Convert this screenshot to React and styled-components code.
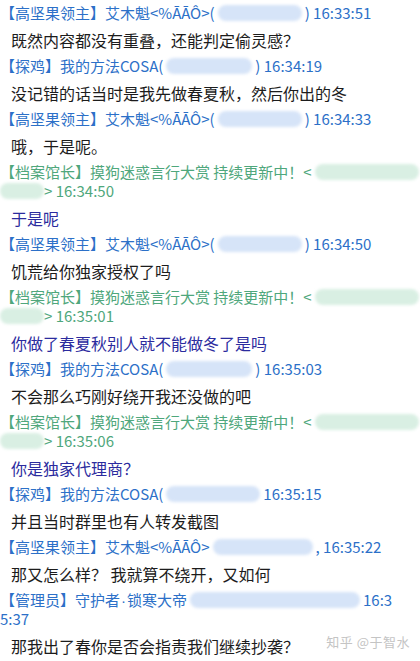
import React from "react";
import styled, { createGlobalStyle } from "styled-components";

const GlobalStyle = createGlobalStyle`
  html, body {
    margin: 0;
    padding: 0;
    background: #ffffff;
  }
  body {
    font-family: "Noto Sans CJK SC", "Noto Sans", sans-serif;
  }
`;

const Chat = styled.div`
  position: relative;
  width: 420px;
  height: 661px;
  overflow: hidden;
  padding-top: 3px;
  box-sizing: border-box;
  background: #ffffff;
`;

const Header = styled.div`
  font-size: 15px;
  line-height: 19px;
  white-space: nowrap;
  color: ${(p) => (p.$tone === "green" ? "#4fa77c" : "#2c70c8")};
`;

const Line = styled.div`
  display: flex;
  align-items: center;
  height: 19px;
`;

const Blob = styled.span`
  display: inline-block;
  flex: none;
  width: ${(p) => p.$w}px;
  height: 16px;
  margin: 0 ${(p) => p.$gap ?? 2}px;
  border-radius: 8px;
  background: ${(p) => (p.$tone === "green" ? "#d9efe3" : "#d6e4f8")};
  filter: blur(1.5px);
`;

const Dot = styled.span`
  font-family: "Liberation Sans", sans-serif;
  padding: 0 1px;
`;

const Message = styled.div`
  padding: 7px 0 5px 11px;
  font-size: 16px;
  line-height: 22px;
  color: ${(p) => (p.$tone === "blue" ? "#2b2b9e" : "#1c1c1c")};
`;

const Watermark = styled.div`
  position: absolute;
  right: 10px;
  top: 632px;
  font-size: 13px;
  color: #c4c4c4;
  letter-spacing: 0.5px;
`;

const GAO = "【高坚果领主】艾木魁<%ĀĀÔ>(";
const JI = "【探鸡】我的方法COSA(";
const DANG = "【档案馆长】摸狗迷惑言行大赏 持续更新中！<";
const ADMIN = (
  <>
    【管理员】守护者<Dot>·</Dot>锁寒大帝
  </>
);

const entries = [
  { lines: [[GAO, 84, ") 16:33:51"]], text: "既然内容都没有重叠，还能判定偷灵感？" },
  { lines: [[JI, 86, ") 16:34:19"]], text: "没记错的话当时是我先做春夏秋，然后你出的冬" },
  { lines: [[GAO, 84, ") 16:34:33"]], text: "哦，于是呢。" },
  { tone: "green", lines: [[DANG, 104, ""], ["", 44, "> 16:34:50"]], text: "于是呢", msgTone: "blue" },
  { lines: [[GAO, 84, ") 16:34:50"]], text: "饥荒给你独家授权了吗" },
  { tone: "green", lines: [[DANG, 104, ""], ["", 44, "> 16:35:01"]], text: "你做了春夏秋别人就不能做冬了是吗", msgTone: "blue" },
  { lines: [[JI, 86, ") 16:35:03"]], text: "不会那么巧刚好绕开我还没做的吧" },
  { tone: "green", lines: [[DANG, 104, ""], ["", 44, "> 16:35:06"]], text: "你是独家代理商？", msgTone: "blue" },
  { lines: [[JI, 94, " 16:35:15"]], text: "并且当时群里也有人转发截图" },
  { lines: [["【高坚果领主】艾木魁<%ĀĀÔ>", 100, ", 16:35:22"]], text: "那又怎么样？ 我就算不绕开，又如何" },
  { lines: [[ADMIN, 170, " 16:3"], ["", 0, "5:37"]], text: "那我出了春你是否会指责我们继续抄袭？" },
];

function HeaderLine({ parts, tone }) {
  const [before, w, after] = parts;
  return (
    <Line>
      {before && <span>{before}</span>}
      {w > 0 && <Blob $w={w} $tone={tone} $gap={before ? 3 : 0} />}
      {after && <span>{after}</span>}
    </Line>
  );
}

export default function App() {
  return (
    <>
      <GlobalStyle />
      <Chat>
        {entries.map((e, i) => (
          <div key={i}>
            <Header $tone={e.tone}>
              {e.lines.map((l, j) => (
                <HeaderLine key={j} parts={l} tone={e.tone} />
              ))}
            </Header>
            <Message $tone={e.msgTone}>{e.text}</Message>
          </div>
        ))}
        <Watermark>知乎 @于智水</Watermark>
      </Chat>
    </>
  );
}
